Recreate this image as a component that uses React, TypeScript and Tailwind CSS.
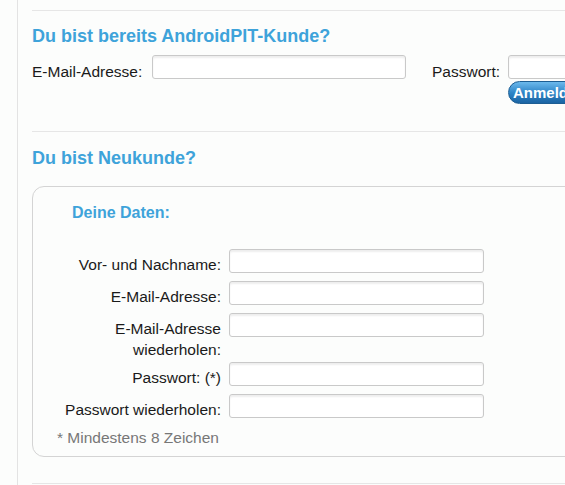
import React from "react";

const inputCls =
  "block h-[24px] shrink-0 rounded-[3px] border border-[#c9c9c9] bg-white shadow-[inset_0_2px_2px_rgba(0,0,0,0.07)] outline-none";

function Row({ label, h }: { label: React.ReactNode; h: string }) {
  return (
    <div className={`flex items-start ${h}`}>
      <div className="w-[188px] shrink-0 pt-[5px] text-right leading-[21px] text-[#1a1a1a]">{label}</div>
      <input className={`${inputCls} ml-[8px] w-[255px]`} type="text" />
    </div>
  );
}

export default function App() {
  return (
    <div className="relative h-[485px] w-[565px] overflow-hidden bg-[#fcfdfc] font-['Liberation_Sans',Arial,sans-serif] text-[15.5px]">
      <div className="flex h-full">
        <div className="w-[17px] shrink-0" />
        <div className="w-px shrink-0 bg-[#e3e3e3]" />
        <div className="w-[700px] shrink-0 pl-[14px]">
          <div className="pt-[10px]">
            <div className="border-t border-[#e6e6e6]" />
          </div>
          <h2 className="mt-[14px] text-[18px] font-bold leading-[22px] text-[#3ea3da]">
            Du bist bereits AndroidPIT-Kunde?
          </h2>
          <div className="mt-[8px] flex items-start">
            <div className="w-[120px] shrink-0 pt-[6px] leading-[21px] text-[#1a1a1a]">E-Mail-Adresse:</div>
            <input className={`${inputCls} w-[254px]`} type="text" />
            <div className="ml-[26px] w-[76px] shrink-0 pt-[6px] leading-[21px] text-[#1a1a1a]">Passwort:</div>
            <div className="flex shrink-0 flex-col">
              <input className={`${inputCls} w-[200px]`} type="password" />
              <button className="mt-[2px] flex h-[23px] w-[90px] items-center rounded-full border border-[#1d5e93] bg-gradient-to-b from-[#6bb9ec] via-[#2f86c8] to-[#1b64a3] pl-[4px] text-[15px] font-bold leading-none text-white">
                Anmelden
              </button>
            </div>
          </div>
          <div className="mt-[27px] border-t border-[#e6e6e6]" />
          <h2 className="mt-[15px] text-[18px] font-bold leading-[22px] text-[#3ea3da]">Du bist Neukunde?</h2>
          <div className="mt-[17px] w-[600px] rounded-[12px] border border-[#d4d4d4] pb-[8px] pt-[16px]">
            <h3 className="pl-[39px] text-[16px] font-bold leading-[20px] text-[#3ea3da]">Deine Daten:</h3>
            <div className="mt-[26px]">
              <Row label="Vor- und Nachname:" h="h-[32px]" />
              <Row label="E-Mail-Adresse:" h="h-[32px]" />
              <Row
                label={
                  <>
                    E-Mail-Adresse
                    <br />
                    wiederholen:
                  </>
                }
                h="h-[49px]"
              />
              <Row label="Passwort: (*)" h="h-[32px]" />
              <Row label="Passwort wiederholen:" h="h-[32px]" />
            </div>
            <div className="mt-[1px] pl-[24px] leading-[21px] text-[#777777]">* Mindestens 8 Zeichen</div>
          </div>
          <div className="mt-[26px] border-t border-[#e6e6e6]" />
        </div>
      </div>
    </div>
  );
}
